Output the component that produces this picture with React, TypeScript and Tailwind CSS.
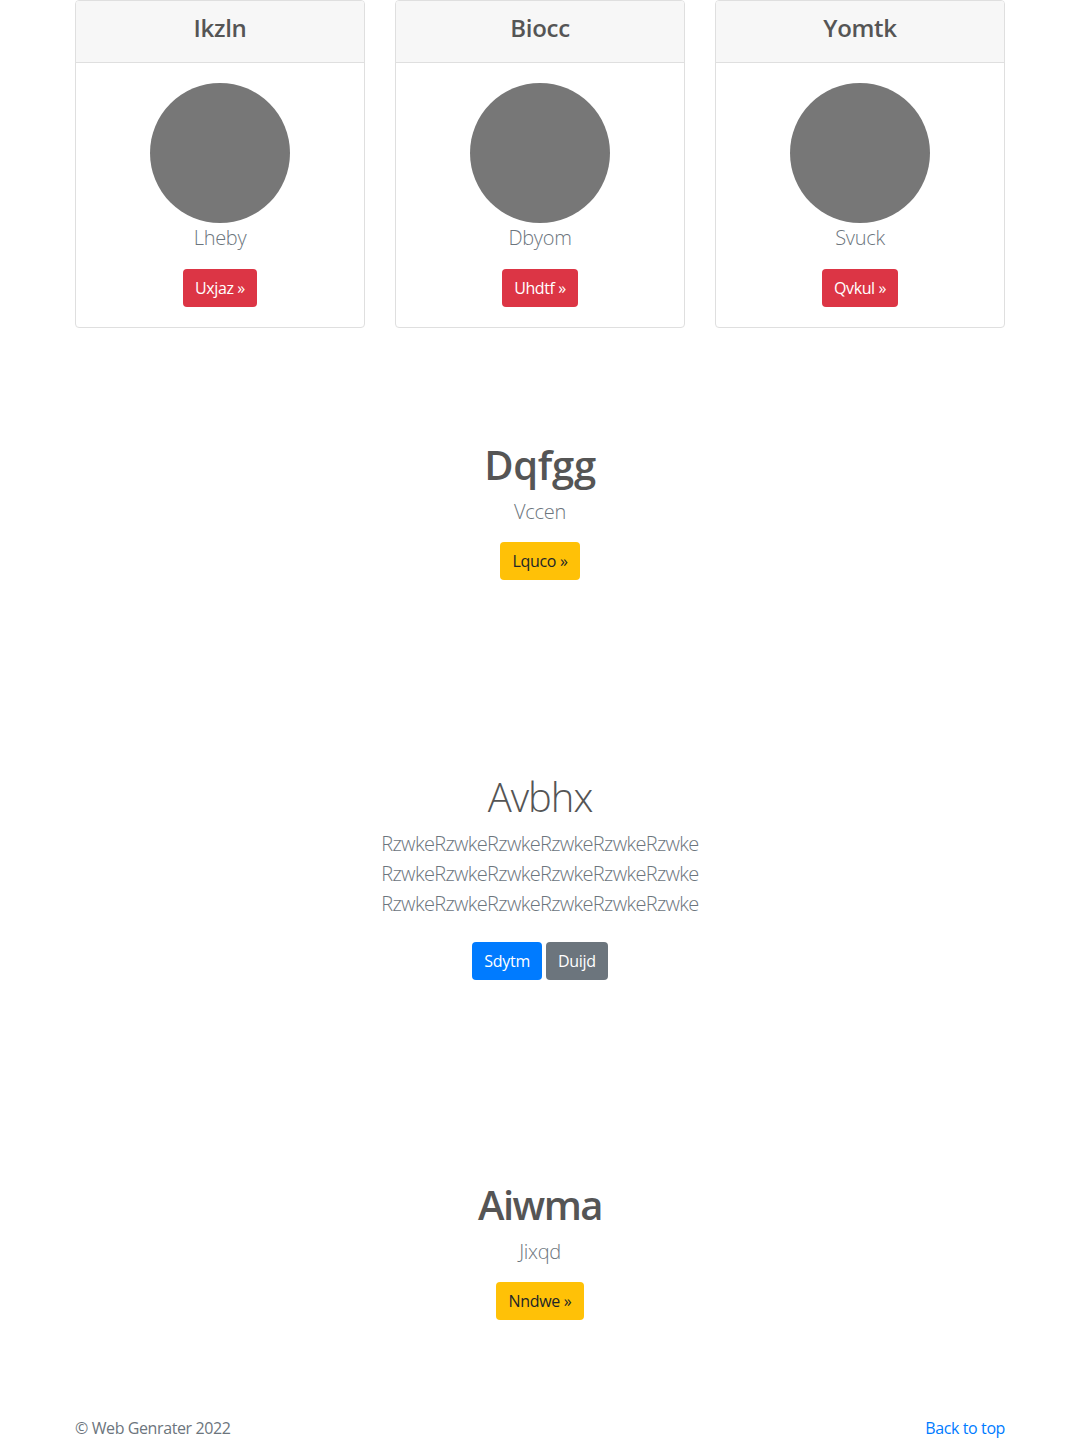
import React from "react";

const font = { fontFamily: '"Open Sans", "Noto Sans", Arial, sans-serif' };

function Card({ title, name, btn }: { title: string; name: string; btn: string }) {
  return (
    <div className="w-[290px] rounded-[4px] border border-[#dfdfdf] bg-white">
      <div className="h-[62px] flex items-center justify-center pb-[8px] bg-[#f7f7f7] border-b border-[#dfdfdf] rounded-t-[3px]">
        <h4 className="text-[24px] leading-[29px] font-semibold text-[#555] tracking-[-0.3px]">{title}</h4>
      </div>
      <div className="flex flex-col items-center p-5">
        <div className="w-[140px] h-[140px] rounded-full bg-[#777]" />
        <p className="text-[20px] leading-[30px] font-light text-[#6c757d] mb-4 tracking-[-0.3px]">{name}</p>
        <button className="h-[38px] px-3 rounded-[4px] bg-[#dc3545] text-white text-[16px] tracking-[-0.4px]">
          {btn} »
        </button>
      </div>
    </div>
  );
}

export default function App() {
  return (
    <div className="w-[1080px] min-h-[1440px] bg-white" style={font}>
      <div className="w-[930px] mx-auto">
        <div className="flex justify-between">
          <Card title="Ikzln" name="Lheby" btn="Uxjaz" />
          <Card title="Biocc" name="Dbyom" btn="Uhdtf" />
          <Card title="Yomtk" name="Svuck" btn="Qvkul" />
        </div>

        <div className="mt-[113px] flex flex-col items-center">
          <h1 className="text-[40px] leading-[48px] font-semibold text-[#555] tracking-[-0.3px]">Dqfgg</h1>
          <p className="mt-2 text-[20px] leading-[30px] font-light text-[#6c757d] tracking-[-0.3px]">Vccen</p>
          <button className="mt-[15px] h-[38px] px-3 rounded-[4px] bg-[#ffc107] text-[#212529] text-[16px] tracking-[-0.3px]">
            Lquco »
          </button>
        </div>

        <div className="mt-[193px] flex flex-col items-center">
          <h1 className="text-[40px] leading-[48px] font-light text-[#555] tracking-[-1px]">Avbhx</h1>
          <div className="mt-2 text-[20px] leading-[30px] font-light text-[#6c757d] text-center tracking-[-0.67px]">
            <p>RzwkeRzwkeRzwkeRzwkeRzwkeRzwke</p>
            <p>RzwkeRzwkeRzwkeRzwkeRzwkeRzwke</p>
            <p>RzwkeRzwkeRzwkeRzwkeRzwkeRzwke</p>
          </div>
          <div className="mt-[23px] flex gap-1">
            <button className="h-[38px] px-3 rounded-[4px] bg-[#007bff] text-white text-[16px] tracking-[-0.3px]">Sdytm</button>
            <button className="h-[38px] px-3 rounded-[4px] bg-[#6c757d] text-white text-[16px] tracking-[-0.3px]">Duijd</button>
          </div>
        </div>

        <div className="mt-[201px] flex flex-col items-center">
          <h1 className="text-[40px] leading-[48px] font-semibold text-[#555] tracking-[-1.5px]">Aiwma</h1>
          <p className="mt-2 text-[20px] leading-[30px] font-light text-[#6c757d] tracking-[-0.3px]">Jixqd</p>
          <button className="mt-[15px] h-[38px] px-3 rounded-[4px] bg-[#ffc107] text-[#212529] text-[16px] tracking-[-0.3px]">
            Nndwe »
          </button>
        </div>

        <div className="mt-[96px] flex justify-between text-[16px] leading-[24px] tracking-[-0.4px]">
          <p className="text-[#6c757d]">© Web Genrater 2022</p>
          <a className="text-[#007bff]" href="#">Back to top</a>
        </div>
      </div>
    </div>
  );
}
